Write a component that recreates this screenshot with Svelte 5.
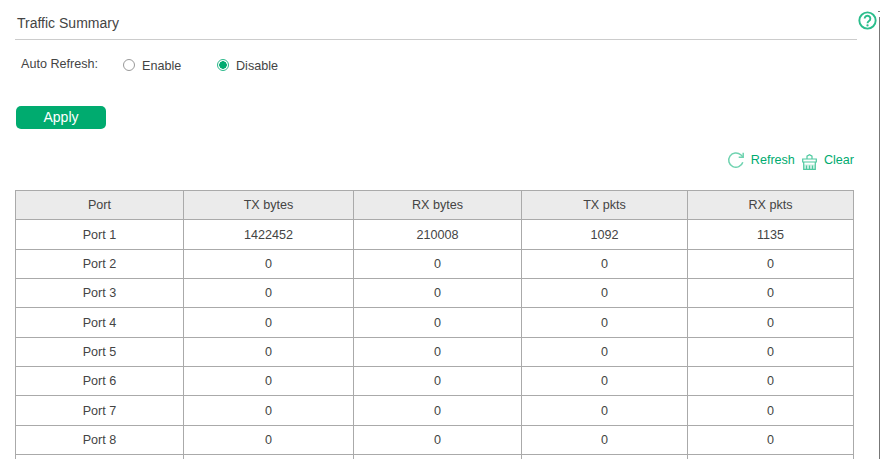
<script>
  const rows = [
    ['Port 1', 1422452, 210008, 1092, 1135],
    ['Port 2', 0, 0, 0, 0],
    ['Port 3', 0, 0, 0, 0],
    ['Port 4', 0, 0, 0, 0],
    ['Port 5', 0, 0, 0, 0],
    ['Port 6', 0, 0, 0, 0],
    ['Port 7', 0, 0, 0, 0],
    ['Port 8', 0, 0, 0, 0],
    ['', '', '', '', '']
  ];
</script>

<div class="page">
  <header class="title-bar">
    <h2>Traffic Summary</h2>
    <svg class="help" viewBox="0 0 20 20" aria-label="Help">
      <circle cx="10" cy="10" r="8.6" fill="none" stroke="#2bbd8c" stroke-width="2" />
      <path d="M7 8a3 3 0 1 1 4.600 2.500c-1 .7-1.600 1.100-1.600 2.300" fill="none" stroke="#2bbd8c" stroke-width="2" />
      <circle cx="10" cy="15.200" r="1.200" fill="#2bbd8c" />
    </svg>
  </header>

  <div class="refresh-row">
    <span class="label">Auto Refresh:</span>
    <label class="radio"><span class="dot"></span><span class="text">Enable</span></label>
    <label class="radio on"><span class="dot"></span><span class="text">Disable</span></label>
  </div>

  <button class="apply"><span>Apply</span></button>

  <div class="actions">
    <span class="action">
      <svg class="refresh-icon" viewBox="0 0 18 18">
        <path d="M15.800 11.200A7.200 7.200 0 1 1 13.800 3.800L16 6" fill="none" stroke="#6fd3b0" stroke-width="1.500" />
        <path d="M16.200 1.800V6.300H11.700" fill="none" stroke="#6fd3b0" stroke-width="1.500" />
      </svg>
      Refresh
    </span>
    <span class="action clear">
      <svg class="clear-icon" viewBox="0 0 15 16">
        <path d="M2 10.500H13V15H2Z" fill="#c5eee0" />
        <path d="M5 5V2.200L7.500 .8L10 2.200V5M.7 5H14.300V8H.7ZM1.700 8V15.300H13.300V8" fill="none" stroke="#4fc9a0" stroke-width="1.200" />
        <path d="M4.500 11.500V15M7.500 11.500V15M10.500 11.500V15" fill="none" stroke="#4fc9a0" stroke-width="1" />
      </svg>
      Clear
    </span>
  </div>

  <table>
    <thead>
      <tr>
        <th class="c1">Port</th>
        <th class="c2">TX bytes</th>
        <th class="c3">RX bytes</th>
        <th class="c4">TX pkts</th>
        <th class="c5">RX pkts</th>
      </tr>
    </thead>
    <tbody>
      {#each rows as row}
        <tr>
          {#each row as cell}
            <td>{cell}</td>
          {/each}
        </tr>
      {/each}
    </tbody>
  </table>
  <div class="edge"></div>
</div>

<style>
  :global(body) {
    margin: 0;
    background: #fff;
    overflow: hidden;
  }

  .page {
    position: relative;
    box-sizing: border-box;
    width: 880px;
    height: 459px;
    overflow: hidden;
    padding: 0 26px 0 15px;
    font-family: "Liberation Sans", Arial, sans-serif;
    font-size: 12.600px;
    color: #444;
  }

  .title-bar {
    box-sizing: border-box;
    display: flex;
    align-items: center;
    height: 40px;
    margin-right: -3px;
    padding: 6px 0 0 2px;
    border-bottom: 1px solid #ccc;
  }

  h2 {
    margin: 0;
    font-size: 14px;
    font-weight: 400;
    color: #444;
  }

  .help {
    position: absolute;
    left: 858px;
    top: 11px;
    width: 19px;
    height: 19px;
  }

  .refresh-row {
    display: flex;
    align-items: center;
    height: 50px;
    padding-left: 6px;
  }

  .label {
    width: 102px;
    margin-top: -3px;
  }

  .radio {
    display: flex;
    align-items: center;
    gap: 7px;
    width: 94px;
  }

  .text {
    margin-top: 2px;
  }

  .dot {
    box-sizing: border-box;
    width: 12px;
    height: 12px;
    border: 1px solid #999;
    border-radius: 50%;
  }

  .on .dot {
    border-color: #2bb88a;
    background: radial-gradient(circle, #00ab70 0 3.500px, #fff 4px);
  }

  .apply {
    display: block;
    width: 90px;
    height: 23px;
    margin: 16px 0 0 1px;
    padding: 0 0 2px;
    border: 0;
    border-radius: 5px;
    background: #00ab6f;
    color: #fff;
    font: 14px "Liberation Sans", Arial, sans-serif;
  }

  .actions {
    display: flex;
    justify-content: flex-end;
    gap: 7px;
    height: 40px;
    margin-top: 21px;
    color: #00ab70;
  }

  .action {
    display: flex;
    align-items: center;
    gap: 6px;
    height: 20px;
  }

  .clear {
    gap: 7px;
  }

  .refresh-icon {
    width: 18px;
    height: 18px;
  }

  .clear-icon {
    width: 15px;
    height: 16px;
    margin-top: 3px;
  }

  table {
    width: 838px;
    border-collapse: collapse;
    table-layout: fixed;
    text-align: center;
  }

  th,
  td {
    box-sizing: border-box;
    height: 29.350px;
    padding: 0;
    border: 1px solid #aaa;
    font-size: 12.600px;
    font-weight: 400;
  }

  th {
    background: #ebebeb;
  }

  .c1 { width: 168px; }
  .c2 { width: 170px; }
  .c3 { width: 168px; }
  .c4 { width: 166px; }
  .c5 { width: 166px; }

  .edge {
    position: absolute;
    left: 879px;
    top: 17px;
    bottom: 0;
    width: 1px;
    background: #777;
  }

  .edge::before {
    content: "";
    position: absolute;
    left: -1px;
    top: -6px;
    width: 2px;
    height: 1px;
    background: #777;
  }
</style>
